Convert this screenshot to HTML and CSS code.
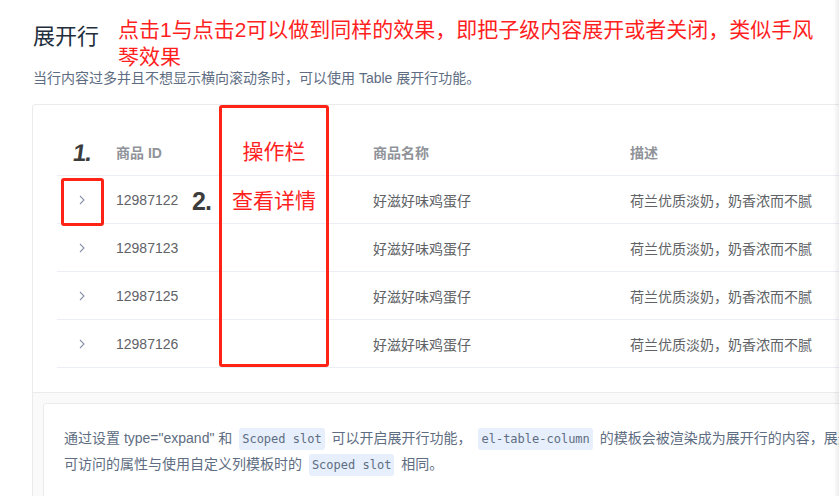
FILE: index.html
```html
<!DOCTYPE html>
<html lang="zh-CN">
<head>
<meta charset="utf-8">
<title>展开行</title>
<link rel="stylesheet" href="styles.css">
</head>
<body>
<div class="page">
  <div class="head">
    <h2 class="title">展开行</h2>
    <p class="note">点击1与点击2可以做到同样的效果，即把子级内容展开或者关闭，类似手风<br>琴效果</p>
  </div>
  <p class="sub">当行内容过多并且不想显示横向滚动条时，可以使用 Table 展开行功能。</p>

  <div class="card">
    <div class="source">
      <table class="tbl">
        <colgroup>
          <col class="c-exp"><col class="c-id"><col class="c-name"><col class="c-desc">
        </colgroup>
        <thead>
          <tr><th></th><th>商品 ID</th><th>商品名称</th><th>描述</th></tr>
        </thead>
        <tbody>
          <tr><td class="exp"><svg class="chev" width="8" height="10" viewBox="0 0 8 10"><path d="M2 1 L6 5 L2 9" fill="none" stroke="#8a93ab" stroke-width="1.1"/></svg></td><td>12987122</td><td>好滋好味鸡蛋仔</td><td>荷兰优质淡奶，奶香浓而不腻</td></tr>
          <tr><td class="exp"><svg class="chev" width="8" height="10" viewBox="0 0 8 10"><path d="M2 1 L6 5 L2 9" fill="none" stroke="#8a93ab" stroke-width="1.1"/></svg></td><td>12987123</td><td>好滋好味鸡蛋仔</td><td>荷兰优质淡奶，奶香浓而不腻</td></tr>
          <tr><td class="exp"><svg class="chev" width="8" height="10" viewBox="0 0 8 10"><path d="M2 1 L6 5 L2 9" fill="none" stroke="#8a93ab" stroke-width="1.1"/></svg></td><td>12987125</td><td>好滋好味鸡蛋仔</td><td>荷兰优质淡奶，奶香浓而不腻</td></tr>
          <tr><td class="exp"><svg class="chev" width="8" height="10" viewBox="0 0 8 10"><path d="M2 1 L6 5 L2 9" fill="none" stroke="#8a93ab" stroke-width="1.1"/></svg></td><td>12987126</td><td>好滋好味鸡蛋仔</td><td>荷兰优质淡奶，奶香浓而不腻</td></tr>
        </tbody>
      </table>
    </div>
    <div class="meta">
      <div class="desc">
        <p>通过设置 type="expand" 和 <code>Scoped slot</code> 可以开启展开行功能， <code>el-table-column</code> 的模板会被渲染成为展开行的内容，展开行<br>可访问的属性与使用自定义列模板时的 <code>Scoped slot</code> 相同。</p>
      </div>
    </div>
  </div>
</div>

<span class="mark mark-1">1.</span>
<span class="mark mark-2">2.</span>
<div class="redbox box-exp"></div>
<div class="redbox box-op">
  <span class="op-head">操作栏</span>
  <span class="op-link">查看详情</span>
</div>
<div class="edge"></div>
</body>
</html>
```

FILE: styles.css
```css
html, body {
  margin: 0;
  padding: 0;
  background: #fff;
  overflow: hidden;
}
body {
  width: 839px;
  height: 496px;
  position: relative;
  font-family: "Liberation Sans", "Noto Sans CJK SC", sans-serif;
}
.page {
  padding: 16px 0 0 32px;
  width: 1000px;
}
.head {
  display: flex;
  align-items: flex-start;
}
.title {
  margin: 7px 0 0 1px;
  font-size: 22px;
  line-height: 27px;
  font-weight: normal;
  color: #1f2f3d;
  width: 85px;
}
.note {
  margin: 0;
  font-size: 21px;
  line-height: 27px;
  color: #ff1f1f;
}
.sub {
  margin: 0 0 0 1px;
  font-size: 14px;
  line-height: 16px;
  color: #5e6d82;
}
.card {
  margin-top: 18px;
  width: 900px;
  border: 1px solid #ebebeb;
  border-radius: 3px;
}
.source {
  padding: 23px 0 24px 24px;
  border-bottom: 1px solid #ebebeb;
}
.tbl {
  border-collapse: collapse;
  width: 876px;
  table-layout: fixed;
  font-size: 14px;
}
.c-exp { width: 50px; }
.c-id { width: 257px; }
.c-name { width: 257px; }
.tbl th, .tbl td {
  height: 47px;
  padding: 0 0 0 9px;
  text-align: left;
  border-bottom: 1px solid #ebeef5;
  vertical-align: middle;
}
.tbl th {
  color: #909399;
  font-weight: bold;
}
.tbl td {
  color: #606266;
}
.tbl td.exp {
  padding: 0;
  text-align: center;
}
.chev {
  display: block;
  margin: 0 auto;
}
.meta {
  background: #fafafa;
  padding: 10px;
}
.desc {
  background: #fff;
  border: 1px solid #ebebeb;
  border-radius: 3px;
  padding: 21px 20px 20px;
}
.desc p {
  margin: 0;
  font-size: 14px;
  line-height: 26px;
  color: #5e6d82;
  white-space: nowrap;
}
.desc code {
  display: inline-block;
  font-family: "DejaVu Sans Mono", monospace;
  font-size: 12px;
  line-height: 22px;
  padding: 0 3px;
  margin: 0 3px;
  background: #e6effb;
  border-radius: 3px;
  color: #5e6d82;
}
.mark {
  position: absolute;
  font-family: "Liberation Sans", sans-serif;
  font-weight: bold;
  color: #3c3c3c;
}
.mark-1 {
  left: 73px;
  top: 140px;
  font-size: 24px;
  line-height: 26px;
  transform: skewX(-8deg);
  letter-spacing: -1px;
}
.mark-2 {
  left: 192px;
  top: 188px;
  font-size: 25px;
  line-height: 26px;
  letter-spacing: -1px;
}
.redbox {
  position: absolute;
  border: 3px solid #ff2316;
  border-radius: 3px;
  box-sizing: border-box;
}
.box-exp {
  left: 61px;
  top: 178px;
  width: 43px;
  height: 48px;
}
.box-op {
  left: 219px;
  top: 105px;
  width: 110px;
  height: 262px;
  display: flex;
  flex-direction: column;
  align-items: center;
  font-family: "Noto Sans CJK SC", sans-serif;
  font-size: 21px;
  color: #ff1f1f;
}
.op-head {
  margin-top: 29px;
  line-height: 26px;
}
.op-link {
  margin-top: 23px;
  line-height: 26px;
}
.edge {
  position: absolute;
  right: 0;
  top: 0;
  width: 6px;
  height: 496px;
  background: linear-gradient(to right, rgba(0,0,0,0), rgba(0,0,0,0.07));
}
```
